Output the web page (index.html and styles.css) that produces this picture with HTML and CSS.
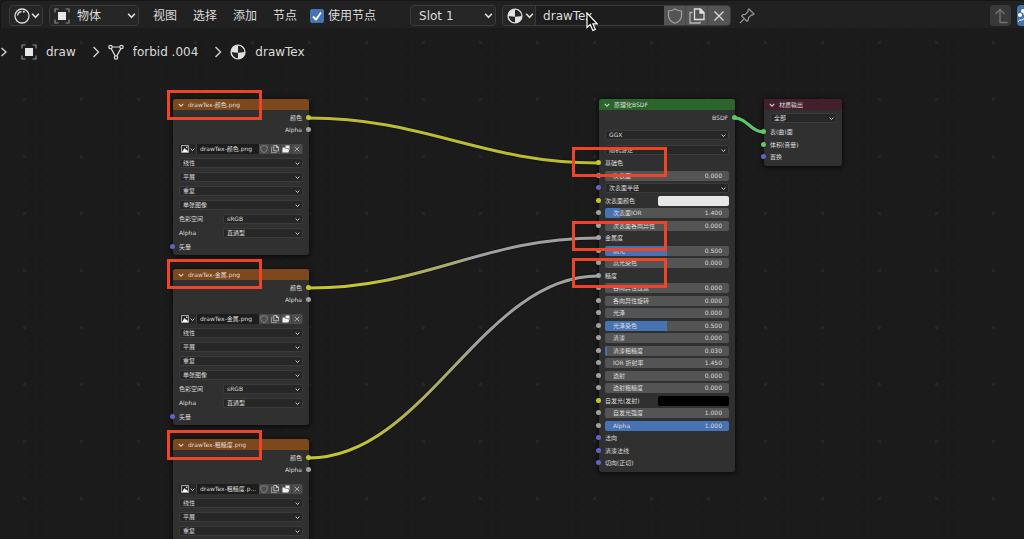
FILE: index.html
```html
<!DOCTYPE html>
<html lang="zh-CN">
<head>
<meta charset="utf-8">
<title>drawTex</title>
<link rel="stylesheet" href="styles.css">
</head>
<body>
<svg class="defs" aria-hidden="true">
  <symbol id="chev" viewBox="0 0 8 8"><path d="M1 2.500 4 5.700 7 2.500" fill="none" stroke="currentColor" stroke-width="1.400"/></symbol>
  <symbol id="object" viewBox="0 0 16 16"><rect x="4" y="4" width="8" height="8" fill="#e6e6e6"/><path d="M1 4.500V1H4.500M11.500 1H15V4.500M15 11.500V15H11.500M4.500 15H1V11.500" fill="none" stroke="#8c8c8c" stroke-width="1.200"/></symbol>
  <symbol id="material" viewBox="0 0 16 16"><circle cx="8" cy="8" r="7" fill="#e2e2e2"/><path d="M8 1.500A6.500 6.500 0 0 1 14.500 8Q11 8.800 8 8.800ZM8 8.800V14.500A6.500 6.500 0 0 1 1.600 8Q5 8.800 8 8.800Z" fill="#262626"/><circle cx="8" cy="8" r="7" fill="none" stroke="#e2e2e2" stroke-width="1.200"/></symbol>
  <symbol id="shield" viewBox="0 0 16 16"><path d="M8 1Q11 3 14.500 3V8Q14 13 8 15.300Q2 13 1.500 8V3Q5 3 8 1Z" fill="none" stroke="#a0a0a0" stroke-width="1.200"/></symbol>
  <symbol id="copy" viewBox="0 0 16 16"><path d="M5.500 1H11.500L15 4.500V11.500H5.500ZM11 1V5H15" fill="none" stroke="#e0e0e0" stroke-width="1.300"/><path d="M11 1 15 5H11Z" fill="#e0e0e0"/><path d="M3.500 4.500H1V15H11V13.500" fill="none" stroke="#b5b5b5" stroke-width="1.300"/></symbol>
  <symbol id="close" viewBox="0 0 16 16"><path d="M3.500 3.500 12.500 12.500M12.500 3.500 3.500 12.500" stroke="#dcdcdc" stroke-width="1.300"/></symbol>
  <symbol id="image" viewBox="0 0 16 16"><path d="M1 1H15V15H1Z" fill="none" stroke="#c8c8c8" stroke-width="1.600"/><path d="M2 14 7 6 10 10 12 9 14 14Z" fill="#fff"/><circle cx="11.500" cy="4.500" r="1.500" fill="#fff"/></symbol>
  <symbol id="folder" viewBox="0 0 16 16"><path d="M7 1H15V9H13V6H7Z" fill="#f0f0f0"/><path d="M1 15V5H5L6.500 7H12V9H15L12.500 15Z" fill="#f0f0f0"/></symbol>
</svg>

<header class="topbar">
  <button class="btn editor" aria-label="编辑器类型">
    <svg class="ic" viewBox="0 0 16 16"><circle cx="8" cy="8" r="7" fill="none" stroke="#dedede" stroke-width="1.300"/><path d="M3.500 7.500Q4 4 7.500 3.500" fill="none" stroke="#dedede" stroke-width="1.300"/><circle cx="9.800" cy="3.700" r="1" fill="#dedede"/></svg>
    <svg class="cv"><use href="#chev"/></svg>
  </button>
  <button class="btn mode"><svg class="ic"><use href="#object"/></svg><span>物体</span><svg class="cv"><use href="#chev"/></svg></button>
  <nav class="menus"><button>视图</button><button>选择</button><button>添加</button><button>节点</button></nav>
  <label class="check"><input type="checkbox" checked><span>使用节点</span></label>
  <select class="slot" aria-label="材质槽"><option>Slot 1</option></select>
  <div class="datablock">
    <button class="browse" aria-label="浏览材质"><svg class="ic"><use href="#material"/></svg><svg class="cv"><use href="#chev"/></svg></button>
    <input type="text" value="drawTex" aria-label="材质名称">
    <button class="sq" aria-label="伪用户"><svg class="ic"><use href="#shield"/></svg></button>
    <button class="sq" aria-label="新建"><svg class="ic"><use href="#copy"/></svg></button>
    <button class="sq" aria-label="断开"><svg class="ic"><use href="#close"/></svg></button>
  </div>
  <button class="pin" aria-label="固定"><svg class="ic" viewBox="0 0 16 16"><path d="M10 1 15 6 13.500 7 12.500 6.800 9.500 9.800 9.300 12 8 13.300 2.700 8 4 6.700 6.200 6.500 9.200 3.500 9 2.500ZM5.300 10.700 1 15" fill="none" stroke="#969696" stroke-width="1.200"/></svg></button>
  <button class="up" aria-label="上一级"><svg class="ic" viewBox="0 0 16 16"><path d="M2.500 6 7 1.500 11.500 6M7 1.500V14.500H14.500" fill="none" stroke="#747474" stroke-width="1.300"/></svg></button>
  <button class="snap" aria-label="吸附"><svg viewBox="0 0 8 16"><circle cx="6" cy="3" r="2" fill="#fff"/><circle cx="3" cy="7" r="2" fill="#fff"/><path d="M6 3 8 9M1 14Q2 11 5 12L8 10" fill="none" stroke="#fff"/></svg></button>
</header>

<main class="canvas">
  <svg class="grid" aria-hidden="true">
    <defs>
      <pattern id="minor" x="1" y="1" width="57" height="57" patternUnits="userSpaceOnUse">
        <path d="M0 1H57M0 12H57M0 24H57M0 35H57M0 46H57" stroke="#1f1f1f" stroke-width="2" stroke-dasharray="2 9 2 10 2 9 2 9 2 10"/>
      </pattern>
      <pattern id="major" x="23" y="11" width="57" height="57" patternUnits="userSpaceOnUse"><rect width="3" height="3" fill="#262626"/></pattern>
    </defs>
    <rect width="100%" height="100%" fill="url(#minor)"/><rect width="100%" height="100%" fill="url(#major)"/>
  </svg>

  <nav class="crumbs">
    <svg class="cr first" viewBox="0 0 8 12"><path d="M1.500 2 6 6 1.500 10" /></svg>
    <svg class="ic"><use href="#object"/></svg><span>draw</span>
    <svg class="cr" viewBox="0 0 8 12"><path d="M1.500 1 6.500 6 1.500 11"/></svg>
    <svg class="ic" viewBox="0 0 16 16"><g fill="none" stroke="#dcdcdc" stroke-width="1.200"><circle cx="2.500" cy="3" r="1.700"/><circle cx="13.500" cy="3" r="1.700"/><circle cx="8" cy="13.500" r="1.700"/><path d="M4.200 3H11.800M3.200 4.600 7.200 12M12.800 4.600 8.800 12"/></g></svg><span>forbid .004</span>
    <svg class="cr" viewBox="0 0 8 12"><path d="M1.500 1 6.500 6 1.500 11"/></svg>
    <svg class="ic"><use href="#material"/></svg><span>drawTex</span>
  </nav>

  <section class="node tex n1">
    <h2 class="title"><svg><use href="#chev"/></svg>drawTex-颜色.png</h2>
    <div class="out">颜色<i class="s r y"></i></div>
    <div class="out">Alpha<i class="s r g"></i></div>
    <div class="stack">
      <div class="file"><button class="fb"><svg><use href="#image"/></svg><svg class="c"><use href="#chev"/></svg></button><input type="text" value="drawTex-颜色.png" aria-label="图像"><button><svg><use href="#shield"/></svg></button><button><svg><use href="#copy"/></svg></button><button><svg><use href="#folder"/></svg></button><button><svg><use href="#close"/></svg></button></div>
      <select aria-label="插值"><option>线性</option></select>
      <select aria-label="投射"><option>平展</option></select>
      <select aria-label="扩展"><option>重复</option></select>
      <select aria-label="来源"><option>单张图像</option></select>
      <label class="pair"><span>色彩空间</span><select><option>sRGB</option></select></label>
      <label class="pair"><span>Alpha</span><select><option>直通型</option></select></label>
      <div class="in">矢量<i class="s v"></i></div>
    </div>
  </section>

  <section class="node tex n2">
    <h2 class="title"><svg><use href="#chev"/></svg>drawTex-金属.png</h2>
    <div class="out">颜色<i class="s r y"></i></div>
    <div class="out">Alpha<i class="s r g"></i></div>
    <div class="stack">
      <div class="file"><button class="fb"><svg><use href="#image"/></svg><svg class="c"><use href="#chev"/></svg></button><input type="text" value="drawTex-金属.png" aria-label="图像"><button><svg><use href="#shield"/></svg></button><button><svg><use href="#copy"/></svg></button><button><svg><use href="#folder"/></svg></button><button><svg><use href="#close"/></svg></button></div>
      <select aria-label="插值"><option>线性</option></select>
      <select aria-label="投射"><option>平展</option></select>
      <select aria-label="扩展"><option>重复</option></select>
      <select aria-label="来源"><option>单张图像</option></select>
      <label class="pair"><span>色彩空间</span><select><option>sRGB</option></select></label>
      <label class="pair"><span>Alpha</span><select><option>直通型</option></select></label>
      <div class="in">矢量<i class="s v"></i></div>
    </div>
  </section>

  <section class="node tex n3">
    <h2 class="title"><svg><use href="#chev"/></svg>drawTex-粗糙度.png</h2>
    <div class="out">颜色<i class="s r y"></i></div>
    <div class="out">Alpha<i class="s r g"></i></div>
    <div class="stack">
      <div class="file"><button class="fb"><svg><use href="#image"/></svg><svg class="c"><use href="#chev"/></svg></button><input type="text" value="drawTex-粗糙度.p..." aria-label="图像"><button><svg><use href="#shield"/></svg></button><button><svg><use href="#copy"/></svg></button><button><svg><use href="#folder"/></svg></button><button><svg><use href="#close"/></svg></button></div>
      <select aria-label="插值"><option>线性</option></select>
      <select aria-label="投射"><option>平展</option></select>
      <select aria-label="扩展"><option>重复</option></select>
    </div>
  </section>

  <section class="node bsdf">
    <h2 class="title"><svg><use href="#chev"/></svg>原理化BSDF</h2>
    <div class="out">BSDF<i class="s r n"></i></div>
    <div class="modes">
      <select aria-label="分布"><option>GGX</option></select>
      <select aria-label="次表面方法"><option>随机游走</option></select>
    </div>
    <div class="rows">
      <div class="in">基础色<i class="s y"></i></div>
      <div class="in"><label class="num"><input type="range" max="1000" value="0" style="--f:0%"><span>次表面</span><output>0.000</output></label><i class="s g"></i></div>
      <div class="in"><select aria-label="次表面半径"><option>次表面半径</option></select><i class="s v"></i></div>
      <div class="in"><span>次表面颜色</span><button class="swatch white" aria-label="次表面颜色"></button><i class="s y"></i></div>
      <div class="in"><label class="num"><input type="range" max="1000" value="125" style="--f:12%"><span>次表面IOR</span><output>1.400</output></label><i class="s g"></i></div>
      <div class="in"><label class="num"><input type="range" max="1000" value="0" style="--f:0%"><span>次表面各向异性</span><output>0.000</output></label><i class="s g"></i></div>
      <div class="in">金属度<i class="s g"></i></div>
      <div class="in"><label class="num"><input type="range" max="1000" value="500" style="--f:50%"><span>高光</span><output>0.500</output></label><i class="s g"></i></div>
      <div class="in"><label class="num"><input type="range" max="1000" value="0" style="--f:0%"><span>高光染色</span><output>0.000</output></label><i class="s g"></i></div>
      <div class="in">糙度<i class="s g"></i></div>
      <div class="in"><label class="num"><input type="range" max="1000" value="0" style="--f:0%"><span>各向异性过滤</span><output>0.000</output></label><i class="s g"></i></div>
      <div class="in"><label class="num"><input type="range" max="1000" value="0" style="--f:0%"><span>各向异性旋转</span><output>0.000</output></label><i class="s g"></i></div>
      <div class="in"><label class="num"><input type="range" max="1000" value="0" style="--f:0%"><span>光泽</span><output>0.000</output></label><i class="s g"></i></div>
      <div class="in"><label class="num"><input type="range" max="1000" value="500" style="--f:50%"><span>光泽染色</span><output>0.500</output></label><i class="s g"></i></div>
      <div class="in"><label class="num"><input type="range" max="1000" value="0" style="--f:0%"><span>清漆</span><output>0.000</output></label><i class="s g"></i></div>
      <div class="in"><label class="num"><input type="range" max="1000" value="30" style="--f:2%"><span>清漆粗糙度</span><output>0.030</output></label><i class="s g"></i></div>
      <div class="in"><label class="num"><input type="range" max="1000" value="0" style="--f:0%"><span>IOR 折射率</span><output>1.450</output></label><i class="s g"></i></div>
      <div class="in"><label class="num"><input type="range" max="1000" value="0" style="--f:0%"><span>透射</span><output>0.000</output></label><i class="s g"></i></div>
      <div class="in"><label class="num"><input type="range" max="1000" value="0" style="--f:0%"><span>透射粗糙度</span><output>0.000</output></label><i class="s g"></i></div>
      <div class="in"><span>自发光(发射)</span><button class="swatch black" aria-label="自发光颜色"></button><i class="s y"></i></div>
      <div class="in"><label class="num"><input type="range" max="1000" value="0" style="--f:0%"><span>自发光强度</span><output>1.000</output></label><i class="s g"></i></div>
      <div class="in"><label class="num"><input type="range" max="1000" value="1000" style="--f:100%"><span>Alpha</span><output>1.000</output></label><i class="s g"></i></div>
      <div class="in">法向<i class="s v"></i></div>
      <div class="in">清漆法线<i class="s v"></i></div>
      <div class="in">切向(正切)<i class="s v"></i></div>
    </div>
  </section>

  <section class="node output">
    <h2 class="title"><svg><use href="#chev"/></svg>材质输出</h2>
    <div class="target"><select aria-label="目标"><option>全部</option></select></div>
    <div class="rows">
      <div class="in">表(曲)面<i class="s n"></i></div>
      <div class="in">体积(音量)<i class="s n"></i></div>
      <div class="in">置换<i class="s v"></i></div>
    </div>
  </section>

  <svg class="wires" aria-hidden="true">
    <defs><linearGradient id="mix" gradientUnits="userSpaceOnUse" x1="370" y1="0" x2="470" y2="0"><stop offset="0" stop-color="#c4c432"/><stop offset=".3" stop-color="#b2b250"/><stop offset=".9" stop-color="#a8a87c"/><stop offset="1" stop-color="#a0a0a0"/></linearGradient></defs>
    <g class="edge"><path d="M309 88C425 88 482 133 598 133"/><path d="M309 258C425 258 482 208 598 208"/><path d="M309 428C425 428 482 246 598 246"/><path d="M735 88C747 88 751 102 763 102"/></g>
    <g class="core"><path stroke="#bcbc30" d="M309 88C425 88 482 133 598 133"/><path stroke="url(#mix)" d="M309 258C425 258 482 208 598 208"/><path stroke="url(#mix)" d="M309 428C425 428 482 246 598 246"/><path stroke="#5bc866" d="M735 88C747 88 751 102 763 102"/></g>
  </svg>

  <div class="mark m1"></div><div class="mark m2"></div><div class="mark m3"></div>
  <div class="mark m4"></div><div class="mark m5"></div><div class="mark m6"></div>
</main>
<svg class="cursor" viewBox="0 0 12 20" aria-hidden="true"><path d="M1 1V15.500L4.300 12.500 6.800 18.500 9.300 17.400 6.900 11.800H11.200Z" fill="#111" stroke="#fff" stroke-width="1.200"/></svg>
</body>
</html>
```
FILE: styles.css
```css
* { box-sizing: border-box; }
body {
  margin: 0;
  height: 100vh;
  display: flex;
  flex-direction: column;
  overflow: hidden;
  position: relative;
  background: #1b1b1b;
  color: #dcdcdc;
  font: 12px/16px "DejaVu Sans", "Noto Sans CJK SC", sans-serif;
}
button, input, select {
  margin: 0;
  padding: 0;
  border: 0;
  border-radius: 0;
  background: none;
  color: inherit;
  font: inherit;
  appearance: none;
  outline: none;
}
svg { display: block; flex: none; }
.defs { position: absolute; width: 0; height: 0; }

/* header */
.topbar {
  display: flex;
  align-items: center;
  flex: none;
  height: 28px;
  padding: 2px 0 0 8px;
  background: #212121;
  border-top: 1px solid #161616;
  border-left: 1px solid #161616;
  border-top-left-radius: 6px;
  overflow: hidden;
}
.ic { width: 16px; height: 16px; }
.cv { width: 9px; height: 9px; }
.btn, .slot, .datablock {
  height: 21px;
  border: 1px solid #3b3b3b;
  border-radius: 4px;
  background-color: #262626;
}
.btn { display: flex; align-items: center; flex: none; }
.editor { width: 34px; padding: 0 2px 0 4px; justify-content: space-between; }
.mode { width: 90px; margin-left: 6px; padding: 0 2px 0 4px; gap: 7px; }
.mode .cv { margin-left: auto; }
.menus { display: flex; flex: none; gap: 16px; margin-left: 14px; }
.check { display: flex; align-items: center; flex: none; gap: 4px; margin-left: 13px; }
.check input {
  width: 14px;
  height: 14px;
  border-radius: 2px;
  background: #4772b3 url("data:image/svg+xml,%3Csvg xmlns='http://www.w3.org/2000/svg' viewBox='0 0 14 14'%3E%3Cpath d='M3 7.500 6 10.500 11 3.500' fill='none' stroke='%23fff' stroke-width='1.800'/%3E%3C/svg%3E");
}
select {
  background: #272727 url("data:image/svg+xml,%3Csvg xmlns='http://www.w3.org/2000/svg' viewBox='0 0 8 8'%3E%3Cpath d='M1 2.500 4 5.700 7 2.500' fill='none' stroke='%23dcdcdc' stroke-width='1.400'/%3E%3C/svg%3E") no-repeat right 2px center / 9px 9px;
}
.slot { width: 86px; flex: none; margin-left: 34px; padding-left: 8px; }
.datablock { display: flex; flex: none; margin-left: 6px; overflow: hidden; }
.datablock .browse { display: flex; align-items: center; gap: 2px; width: 33px; padding-left: 4px; border-right: 1px solid #3b3b3b; }
.datablock input { width: 128px; padding-left: 7px; background: #1d1d1d; }
.sq { display: grid; place-items: center; width: 22px; background: #545454; border-right: 1px solid #464646; }
.sq:last-child { border-right: 0; }
.pin { margin-left: 8px; flex: none; }
.up { display: grid; place-items: center; width: 21px; height: 21px; margin-left: auto; flex: none; border-radius: 4px; background: #393939; }
.snap { width: 7px; height: 21px; margin-left: 6px; flex: none; background: #4772b3; border-radius: 4px 0 0 4px; }
.snap svg { width: 8px; height: 16px; }

/* canvas */
.canvas { position: relative; flex: 1; min-height: 0; margin-top: 2px; overflow: hidden; }
.grid, .wires { position: absolute; inset: 0; width: 100%; height: 100%; }
.crumbs { position: relative; display: flex; align-items: center; height: 44px; }
.crumbs span { margin: 0 16px 0 9px; }
.crumbs span + .cr { margin-right: 8px; }
.cr { width: 8px; height: 12px; fill: none; stroke: #d0d0d0; stroke-width: 1.4px; }
.cr.first { margin-right: 13px; }

/* nodes */
.node {
  position: absolute;
  border-radius: 3px;
  background: #303030;
  box-shadow: 0 1px 5px 1px rgba(0, 0, 0, .6);
  font-size: 6px;
  line-height: 8px;
  padding-bottom: 3px;
}
.tex { left: 173px; width: 136px; }
.n1 { top: 69px; }
.n2 { top: 239px; }
.n3 { top: 409px; height: 156px; }
.bsdf { left: 599px; top: 69px; width: 136px; }
.output { left: 764px; top: 69px; width: 78px; }
.title {
  display: flex;
  align-items: center;
  gap: 4px;
  height: 11px;
  margin: 0 0 2px;
  padding-left: 5px;
  border-radius: 3px 3px 0 0;
  background: #7d481b;
  font-size: 6px;
  font-weight: 400;
}
.title svg { width: 6px; height: 6px; }
.bsdf .title { background: #2b652b; }
.output .title { background: #431e2b; }
.out { position: relative; height: 12px; padding: 2px 7px; text-align: right; }
.s {
  position: absolute;
  left: -3px;
  top: 50%;
  width: 5px;
  height: 5px;
  margin-top: -3px;
  border-radius: 50%;
  z-index: 1;
}
.s.r { left: auto; right: -2px; }
.y { background: #c7c729; }
.g { background: #a1a1a1; }
.v { background: #6363c7; }
.n { background: #63c763; }
.stack { display: flex; flex-direction: column; gap: 4px; padding: 8px 6px 0; }
.node select {
  width: 100%;
  height: 10px;
  padding-left: 3px;
  border: 1px solid #3b3b3b;
  border-radius: 2px;
  background-size: 5px 5px;
}
.file { display: flex; height: 10px; border-radius: 2px; overflow: hidden; }
.file input { flex: 1; min-width: 0; padding-left: 3px; background: #1d1d1d; }
.file button { display: grid; place-items: center; width: 11px; flex: none; background: #4c4c4c; border-right: 1px solid #404040; }
.file svg { width: 8px; height: 8px; }
.file .fb { display: flex; align-items: center; gap: 1px; width: 18px; padding-left: 2px; background: #272727; }
.file svg.c { width: 5px; height: 5px; }
.pair { display: grid; grid-template-columns: 44px 1fr; align-items: center; height: 10px; }
.stack .in { height: 10px; margin: 0 -6px; padding: 0 6px; }
.in { position: relative; display: flex; align-items: center; padding: 0 6px; }
.modes { display: flex; flex-direction: column; gap: 5px; padding: 6px 6px 2px; }
.rows { display: grid; grid-auto-rows: 12px 13px; }
.num { display: grid; grid-template-columns: 1fr auto; align-items: center; width: 100%; height: 10px; }
.num input {
  grid-area: 1 / 1 / 2 / 3;
  width: 100%;
  height: 10px;
  border-radius: 2px;
  background: linear-gradient(to right, #4772b3 var(--f), #545454 var(--f));
}
.num input::-webkit-slider-thumb { appearance: none; width: 1px; height: 10px; opacity: 0; }
.num span { grid-area: 1 / 1; padding-left: 8px; z-index: 1; pointer-events: none; }
.num output { grid-area: 1 / 2; padding-right: 7px; z-index: 1; pointer-events: none; }
.swatch { width: 71px; height: 10px; margin-left: auto; border-radius: 2px; }
.white { background: #e7e7e7; }
.black { background: #000; }
.target { padding: 1px 5px 3px 6px; }

/* links */
.wires { pointer-events: none; }
.wires path { fill: none; }
.edge { stroke: #141414; stroke-width: 5px; }
.core { stroke-width: 3px; }

/* annotations */
.mark { position: absolute; width: 95px; height: 30px; border: 3px solid #ee4427; pointer-events: none; z-index: 2; }
.m1 { left: 167px; top: 60px; }
.m2 { left: 167px; top: 229px; }
.m3 { left: 167px; top: 400px; }
.m4 { left: 572px; top: 117px; }
.m5 { left: 572px; top: 191px; }
.m6 { left: 572px; top: 228px; }
.cursor { position: absolute; left: 586px; top: 12px; width: 12px; height: 20px; pointer-events: none; }
```
